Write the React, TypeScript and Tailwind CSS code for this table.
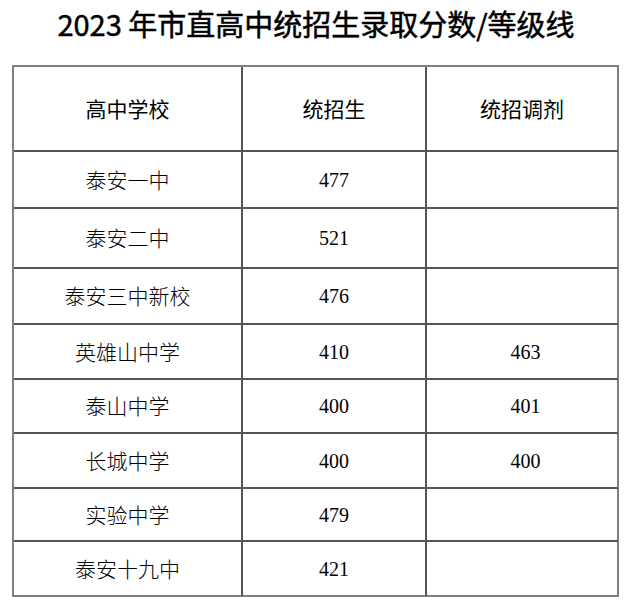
import React from "react";

const rows: { name: string; a: string; b: string; h: string }[] = [
  { name: "泰安一中", a: "477", b: "", h: "h-[57px]" },
  { name: "泰安二中", a: "521", b: "", h: "h-[60px]" },
  { name: "泰安三中新校", a: "476", b: "", h: "h-[56px]" },
  { name: "英雄山中学", a: "410", b: "463", h: "h-[55px]" },
  { name: "泰山中学", a: "400", b: "401", h: "h-[54px]" },
  { name: "长城中学", a: "400", b: "400", h: "h-[55px]" },
  { name: "实验中学", a: "479", b: "", h: "h-[53px]" },
  { name: "泰安十九中", a: "421", b: "", h: "h-[55px]" },
];

export default function App() {
  return (
    <div className="w-[626px] h-[603px] bg-white text-black overflow-hidden">
      <div className="h-[65px] flex justify-center pt-[5px] pl-[6px] text-[29px] leading-[37px] font-normal [-webkit-text-stroke:0.5px_black] font-['Noto_Sans_CJK_SC',sans-serif]">
        2023 年市直高中统招生录取分数/等级线
      </div>
      <div className="ml-[12px] w-[607px] border-l-2 border-t-2 border-[#808080]">
        <div className="flex h-[85px] text-[21px] font-['Noto_Sans_CJK_SC',sans-serif]">
          <div className="w-[229px] flex items-center justify-center border-r-2 border-b-2 border-[#555555]">
            高中学校
          </div>
          <div className="w-[184px] flex items-center justify-center border-r-2 border-b-2 border-[#555555]">
            统招生
          </div>
          <div className="w-[192px] flex items-center justify-center border-r-2 border-b-2 border-r-[#808080] border-b-[#555555]">
            统招调剂
          </div>
        </div>
        {rows.map((r, i) => {
          const last = i === rows.length - 1;
          return (
            <div key={i} className={`flex ${r.h}`}>
              <div
                className={`w-[229px] flex items-center justify-center border-r-2 border-b-2 border-r-[#555555] ${
                  last ? "border-b-[#808080]" : "border-b-[#555555]"
                } text-[21px] font-light font-['Noto_Sans_CJK_SC',sans-serif]`}
              >
                {r.name}
              </div>
              <div
                className={`w-[184px] flex items-center justify-center border-r-2 border-b-2 border-r-[#555555] ${
                  last ? "border-b-[#808080]" : "border-b-[#555555]"
                } text-[20px] font-['Liberation_Serif',serif]`}
              >
                {r.a}
              </div>
              <div
                className={`w-[192px] flex items-center justify-center border-r-2 border-b-2 border-r-[#808080] ${
                  last ? "border-b-[#808080]" : "border-b-[#555555]"
                } pl-[7px] text-[20px] font-['Liberation_Serif',serif]`}
              >
                {r.b}
              </div>
            </div>
          );
        })}
      </div>
    </div>
  );
}
